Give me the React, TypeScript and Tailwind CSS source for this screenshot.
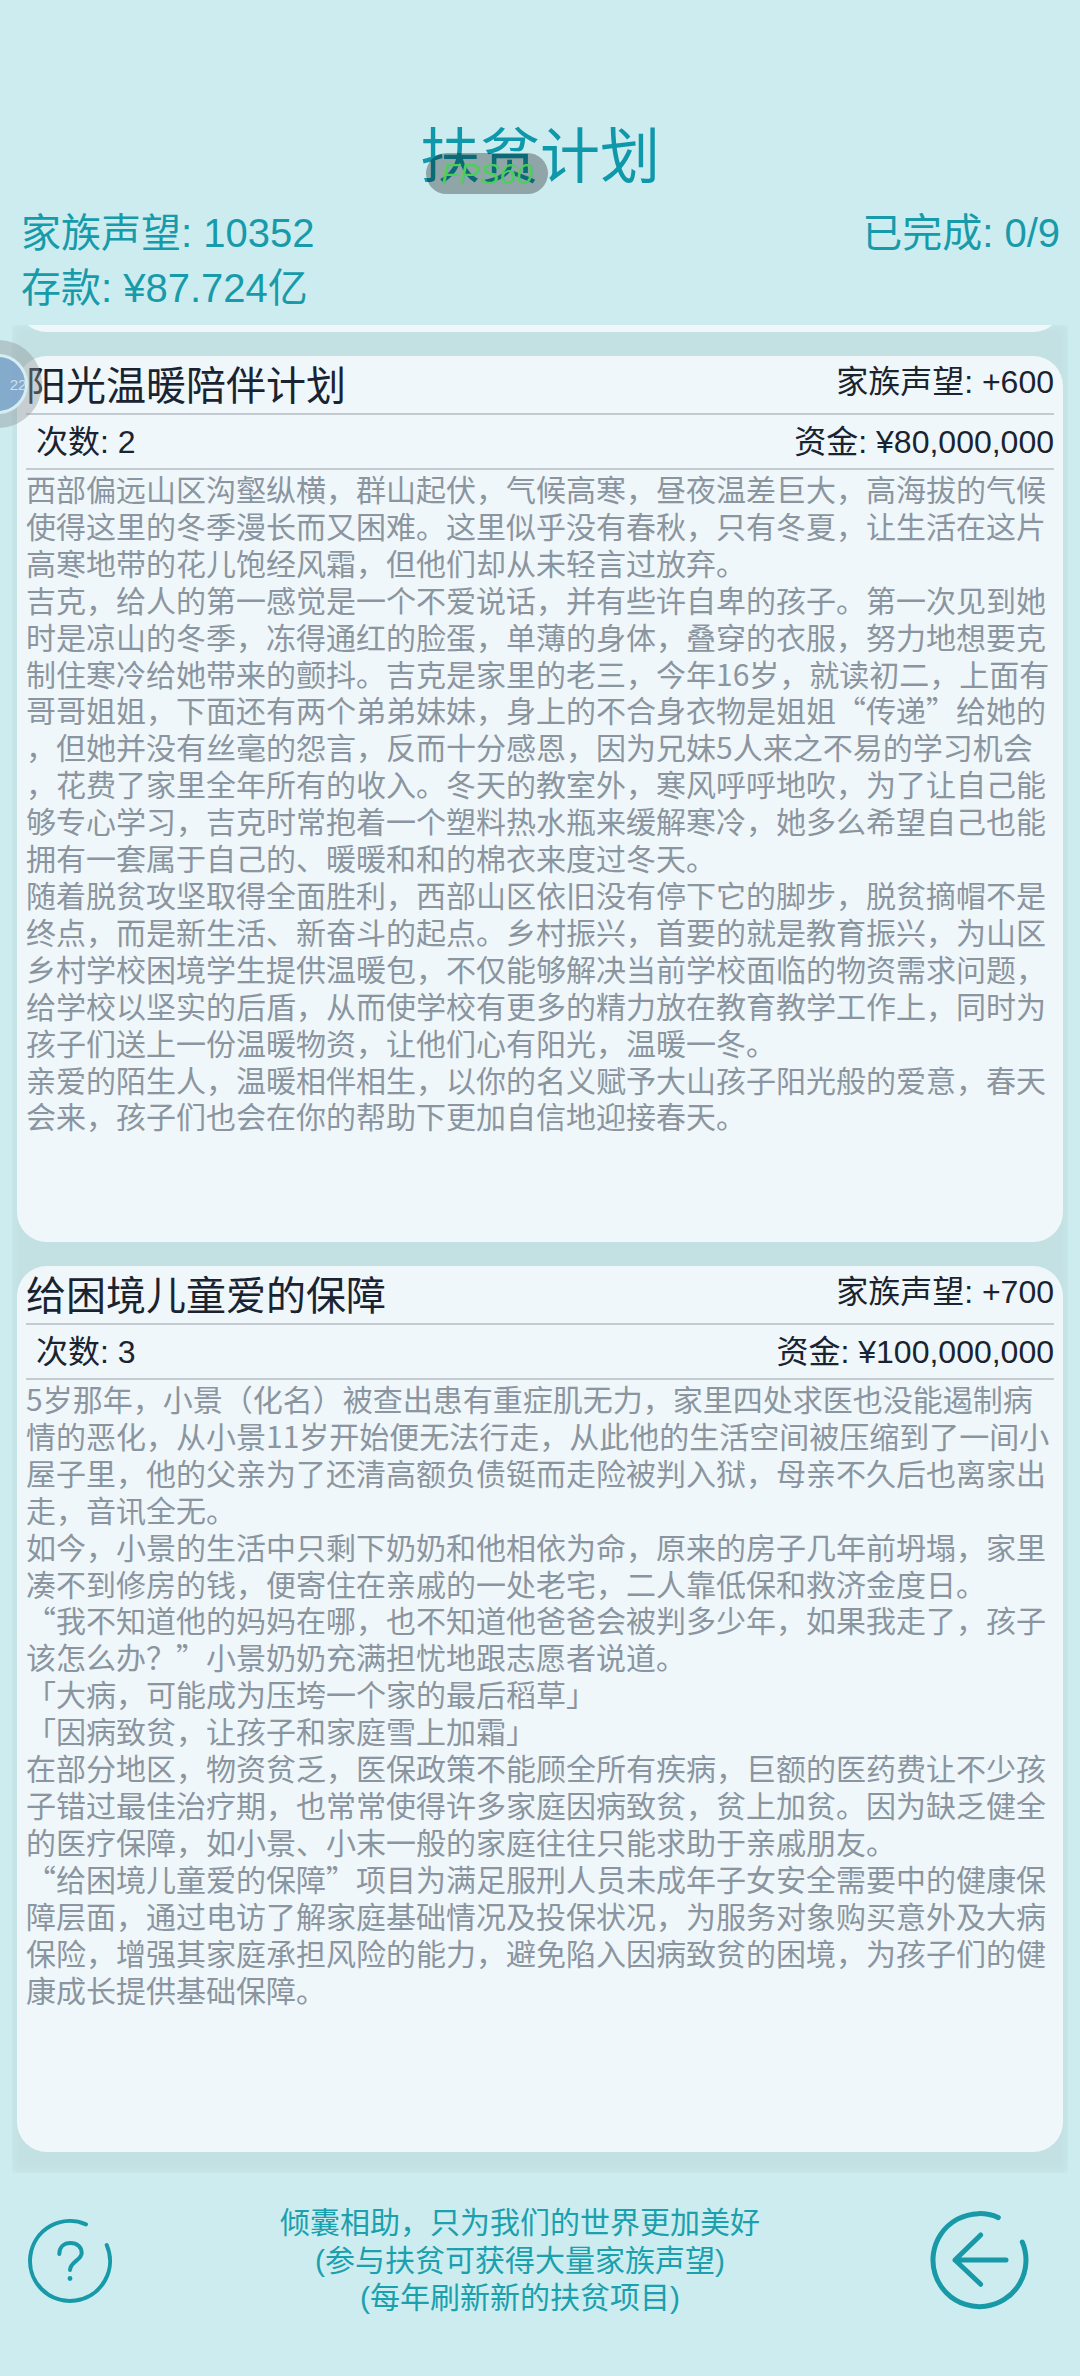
const projects = [
  {
    title: "阳光温暖陪伴计划",
    reputation: "+600",
    times: 2,
    funds: "¥80,000,000",
    lines: [
      "西部偏远山区沟壑纵横，群山起伏，气候高寒，昼夜温差巨大，高海拔的气候",
      "使得这里的冬季漫长而又困难。这里似乎没有春秋，只有冬夏，让生活在这片",
      "高寒地带的花儿饱经风霜，但他们却从未轻言过放弃。",
      "吉克，给人的第一感觉是一个不爱说话，并有些许自卑的孩子。第一次见到她",
      "时是凉山的冬季，冻得通红的脸蛋，单薄的身体，叠穿的衣服，努力地想要克",
      "制住寒冷给她带来的颤抖。吉克是家里的老三，今年16岁，就读初二，上面有",
      "哥哥姐姐，下面还有两个弟弟妹妹，身上的不合身衣物是姐姐“传递”给她的",
      "，但她并没有丝毫的怨言，反而十分感恩，因为兄妹5人来之不易的学习机会",
      "，花费了家里全年所有的收入。冬天的教室外，寒风呼呼地吹，为了让自己能",
      "够专心学习，吉克时常抱着一个塑料热水瓶来缓解寒冷，她多么希望自己也能",
      "拥有一套属于自己的、暖暖和和的棉衣来度过冬天。",
      "随着脱贫攻坚取得全面胜利，西部山区依旧没有停下它的脚步，脱贫摘帽不是",
      "终点，而是新生活、新奋斗的起点。乡村振兴，首要的就是教育振兴，为山区",
      "乡村学校困境学生提供温暖包，不仅能够解决当前学校面临的物资需求问题，",
      "给学校以坚实的后盾，从而使学校有更多的精力放在教育教学工作上，同时为",
      "孩子们送上一份温暖物资，让他们心有阳光，温暖一冬。",
      "亲爱的陌生人，温暖相伴相生，以你的名义赋予大山孩子阳光般的爱意，春天",
      "会来，孩子们也会在你的帮助下更加自信地迎接春天。",
    ],
  },
  {
    title: "给困境儿童爱的保障",
    reputation: "+700",
    times: 3,
    funds: "¥100,000,000",
    lines: [
      "5岁那年，小景（化名）被查出患有重症肌无力，家里四处求医也没能遏制病",
      "情的恶化，从小景11岁开始便无法行走，从此他的生活空间被压缩到了一间小",
      "屋子里，他的父亲为了还清高额负债铤而走险被判入狱，母亲不久后也离家出",
      "走，音讯全无。",
      "如今，小景的生活中只剩下奶奶和他相依为命，原来的房子几年前坍塌，家里",
      "凑不到修房的钱，便寄住在亲戚的一处老宅，二人靠低保和救济金度日。",
      "“我不知道他的妈妈在哪，也不知道他爸爸会被判多少年，如果我走了，孩子",
      "该怎么办？”小景奶奶充满担忧地跟志愿者说道。",
      "「大病，可能成为压垮一个家的最后稻草」",
      "「因病致贫，让孩子和家庭雪上加霜」",
      "在部分地区，物资贫乏，医保政策不能顾全所有疾病，巨额的医药费让不少孩",
      "子错过最佳治疗期，也常常使得许多家庭因病致贫，贫上加贫。因为缺乏健全",
      "的医疗保障，如小景、小末一般的家庭往往只能求助于亲戚朋友。",
      "“给困境儿童爱的保障”项目为满足服刑人员未成年子女安全需要中的健康保",
      "障层面，通过电访了解家庭基础情况及投保状况，为服务对象购买意外及大病",
      "保险，增强其家庭承担风险的能力，避免陷入因病致贫的困境，为孩子们的健",
      "康成长提供基础保障。",
    ],
  },
];

type Project = (typeof projects)[number];

function ProjectCard({ project }: { project: Project }) {
  return (
    <div className="h-[886px] rounded-[30px] bg-[#eff7fa] px-[9px] overflow-hidden">
      <div className="flex h-[59px] items-center justify-between border-b-2 border-[#c3cbd1]">
        <div className="text-[40px] leading-none text-[#1a2330] mt-[2px]">{project.title}</div>
        <div className="text-[32px] leading-none text-[#1a2330] -mt-[6px]">家族声望: {project.reputation}</div>
      </div>
      <div className="flex h-[55px] items-center justify-between border-b-2 border-[#c3cbd1] pl-[10px] text-[32px] leading-none text-[#1a2330]">
        <div>次数: {project.times}</div>
        <div>资金: {project.funds}</div>
      </div>
      <div className="font-['Noto_Sans_CJK_SC',sans-serif] text-[30px] leading-[36.9px] text-[#8b959f] whitespace-nowrap">
        {project.lines.map((line, i) => (
          <div key={i}>{line}</div>
        ))}
      </div>
    </div>
  );
}

export default function App() {
  return (
    <div className="relative h-[2376px] w-[1080px] overflow-hidden bg-[#cdecef] font-['Liberation_Sans','Noto_Sans_CJK_SC',sans-serif] text-[#179baa]">
      <div className="pt-[122px] text-center text-[60px] leading-[72px] text-[#0f98a9]">扶贫计划</div>

      <div className="mt-[12px] flex justify-between pl-[21px] pr-[20px] text-[40px] leading-[55px]">
        <div>
          <div>家族声望: 10352</div>
          <div>存款: ¥87.724亿</div>
        </div>
        <div>已完成: 0/9</div>
      </div>

      <div className="mx-[12px] mt-[9px] h-[1848px] overflow-hidden bg-[#c3e1e3] px-[5px] shadow-[inset_0_0_10px_#cdecef]">
        <div className="-mt-[30px] h-[37px] rounded-b-[30px] bg-[#eff7fa]" />
        <div className="mt-[24px] flex flex-col gap-[24px]">
          {projects.map((p) => (
            <ProjectCard key={p.title} project={p} />
          ))}
        </div>
      </div>

      <div className="mt-[31px] flex items-center pl-[20px]">
        <svg viewBox="0 0 100 100" className="h-[100px] w-[100px]" fill="none" stroke="#1799a8" strokeLinecap="round">
          <path d="M86.7 35A40 40 0 1 1 66 14.3" strokeWidth="4" />
          <path d="M39.3 44C39.3 37 44 33 50.5 33C57 33 61.7 37 61.7 43C61.7 50 50 52 50 60" strokeWidth="4" />
          <circle cx="50" cy="68.5" r="2.4" fill="#1799a8" stroke="none" />
        </svg>
        <div className="w-[800px] text-center text-[30px] leading-[37.5px] text-[#1ba0ae]">
          <div>倾囊相助，只为我们的世界更加美好</div>
          <div>(参与扶贫可获得大量家族声望)</div>
          <div>(每年刷新新的扶贫项目)</div>
        </div>
        <svg viewBox="0 0 100 100" className="ml-[10px] h-[100px] w-[100px]" fill="none" stroke="#1799a8" strokeLinecap="round">
          <path d="M92.3 32A46.5 46.5 0 1 1 68.3 7.6" strokeWidth="5" />
          <path d="M76 50H25M50.7 25L25 50L50.7 74.3" strokeWidth="5" strokeLinejoin="round" />
        </svg>
      </div>

      {/* fps overlay */}
      <div className="absolute left-[426px] top-[153px] flex h-[41px] w-[122px] items-center justify-center rounded-full bg-black/30 text-[30px] italic leading-none text-[#4ccf5a]">
        FPS60
      </div>

      {/* floating ball */}
      <div className="absolute -left-[46px] top-[340px] flex h-[88px] w-[88px] items-center justify-center rounded-full bg-[#8a9296]/40">
        <div className="flex h-[60px] w-[60px] items-center justify-center rounded-full border-[3px] border-[#d5eef2] bg-[#7ea6cc]/90">
          <span className="ml-[40px] text-[15px] leading-none text-[#cfe0ea]">22</span>
        </div>
      </div>
    </div>
  );
}
